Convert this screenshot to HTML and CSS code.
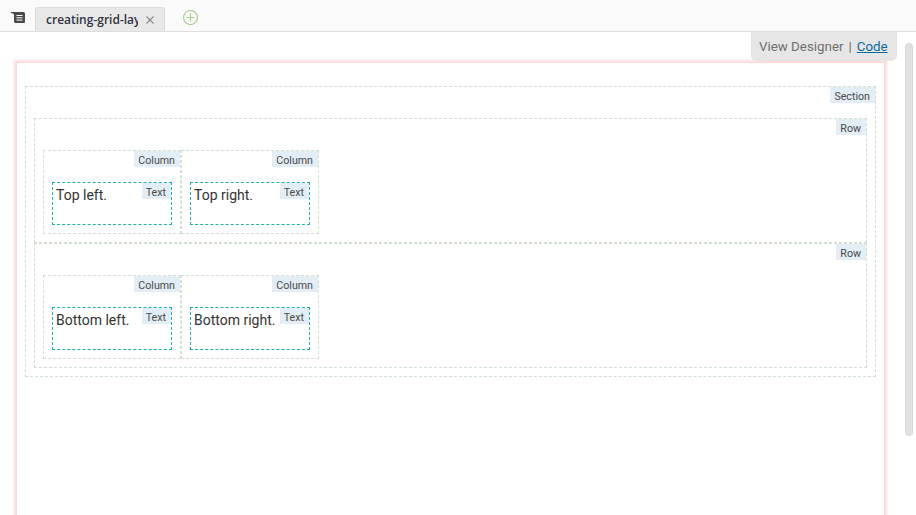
FILE: index.html
```html
<!DOCTYPE html>
<html lang="en">
<head>
<meta charset="utf-8">
<title>creating-grid-layout</title>
<link rel="stylesheet" href="styles.css">
</head>
<body>
<header class="topbar">
  <svg class="tree-icon" width="15" height="11" viewBox="0 0 15 11"><path d="M0 0H13.500Q15 0 15 1.500V10Q15 11 14 11H5.500Q4 11 4 9.500V3Q4 1.500 2.500 1.500Z" fill="#4a4a4a"/><path d="M6.500 3.500H12.500M6.500 5.800H12.500M6.500 8.100H12.500" stroke="#fff" stroke-width="1"/></svg>
  <div class="tab"><span class="tab-name">creating-grid-layout</span><svg class="tab-close" width="8" height="8" viewBox="0 0 8 8"><path d="M.5.500 7.500 7.500M7.500.500.500 7.500" stroke="#8a8a8a" stroke-width="1.100"/></svg></div>
  <svg class="add-icon" width="15" height="15" viewBox="0 0 15 15"><circle cx="7.500" cy="7.500" r="7" fill="none" stroke="#a5d28a" stroke-width="1.200"/><path d="M7.500 3.500V11.500M3.500 7.500H11.500" stroke="#a5d28a" stroke-width="1.200"/></svg>
</header>
<main class="workspace">
  <div class="view-toggle">View Designer<span class="sep">|</span><a class="code-link" href="#">Code</a></div>
  <div class="scrollbar"></div>
  <div class="frame">
    <section class="block section">
      <span class="label">Section</span>
      <div class="block row">
        <span class="label">Row</span>
        <div class="block column"><span class="label">Column</span><div class="text"><span class="label">Text</span>Top left.</div></div>
        <div class="block column"><span class="label">Column</span><div class="text"><span class="label">Text</span>Top right.</div></div>
      </div>
      <div class="block row">
        <span class="label">Row</span>
        <div class="block column"><span class="label">Column</span><div class="text"><span class="label">Text</span>Bottom left.</div></div>
        <div class="block column"><span class="label">Column</span><div class="text"><span class="label">Text</span>Bottom right.</div></div>
      </div>
    </section>
  </div>
</main>
</body>
</html>
```
FILE: styles.css
```css
* { box-sizing: border-box; }
html, body { margin: 0; height: 100%; overflow: hidden; background: #fff; }
body { font-family: Roboto, "Liberation Sans", sans-serif; color: #333; }

.topbar {
  height: 32px;
  display: flex;
  align-items: flex-end;
  background: #fafafa;
  border-bottom: 1px solid #ddd;
  padding-left: 10px;
}
.tree-icon { margin: 0 10px 8px 0; }
.tab {
  width: 130px;
  height: 24px;
  display: flex;
  align-items: center;
  padding: 0 10px;
  background: #e8e8e8;
  border: 1px solid #dcdcdc;
  border-bottom: 0;
  border-radius: 3px 3px 0 0;
  font: 600 12px "Open Sans", sans-serif;
  color: #2f3542;
}
.tab-name { width: 92px; overflow: hidden; white-space: nowrap; flex: none; }
.tab-close { margin-left: 8px; flex: none; }
.add-icon { margin: 0 0 6px 18px; }

.workspace { position: relative; height: 483px; padding: 31px 0 0 17px; overflow: hidden; }
.view-toggle {
  position: absolute;
  z-index: 1;
  top: 0;
  left: 751px;
  width: 146px;
  height: 29px;
  padding: 7px 0 0 8px;
  background: #e6e6e6;
  border-radius: 0 0 5px 5px;
  font-size: 13.333px;
  line-height: 15px;
  color: #6f6f6f;
}
.sep { margin: 0 5px 0 5px; }
.code-link { color: #0a6aa1; }
.scrollbar {
  position: absolute;
  top: 11px;
  left: 905px;
  width: 8px;
  height: 393px;
  background: #e2e2e2;
  border: 1px solid #d6d6d6;
  border-radius: 4px;
}

.frame {
  width: 867px;
  height: 600px;
  padding: 23px 8px 0;
  background: #fff;
  box-shadow: 0 0 0 1px #ffd9d9, 0 0 0 2px #ffdfdf, 0 0 0 3px #ffe8e8, 0 0 0 4px #fff3f3;
}
.block { position: relative; border: 1px dashed #cfe0cf; }
.section { width: 851px; height: 291px; padding: 31px 8px 8px; }
.row { width: 833px; height: 125px; padding: 31px 8px 8px; display: flex; }
.column { width: 138px; height: 84px; padding: 31px 8px 8px; }
.text {
  position: relative;
  height: 43px;
  padding: 3px;
  border: 1px dashed #1fb0a6;
  font-size: 14px;
  line-height: 18px;
  color: #333;
}
.label {
  position: absolute;
  top: 0;
  right: 0;
  height: 16px;
  padding: 2px 5px 0 4px;
  background: #e3edf5;
  font-size: 10.667px;
  line-height: 16px;
  color: #4a4a4a;
}
```
